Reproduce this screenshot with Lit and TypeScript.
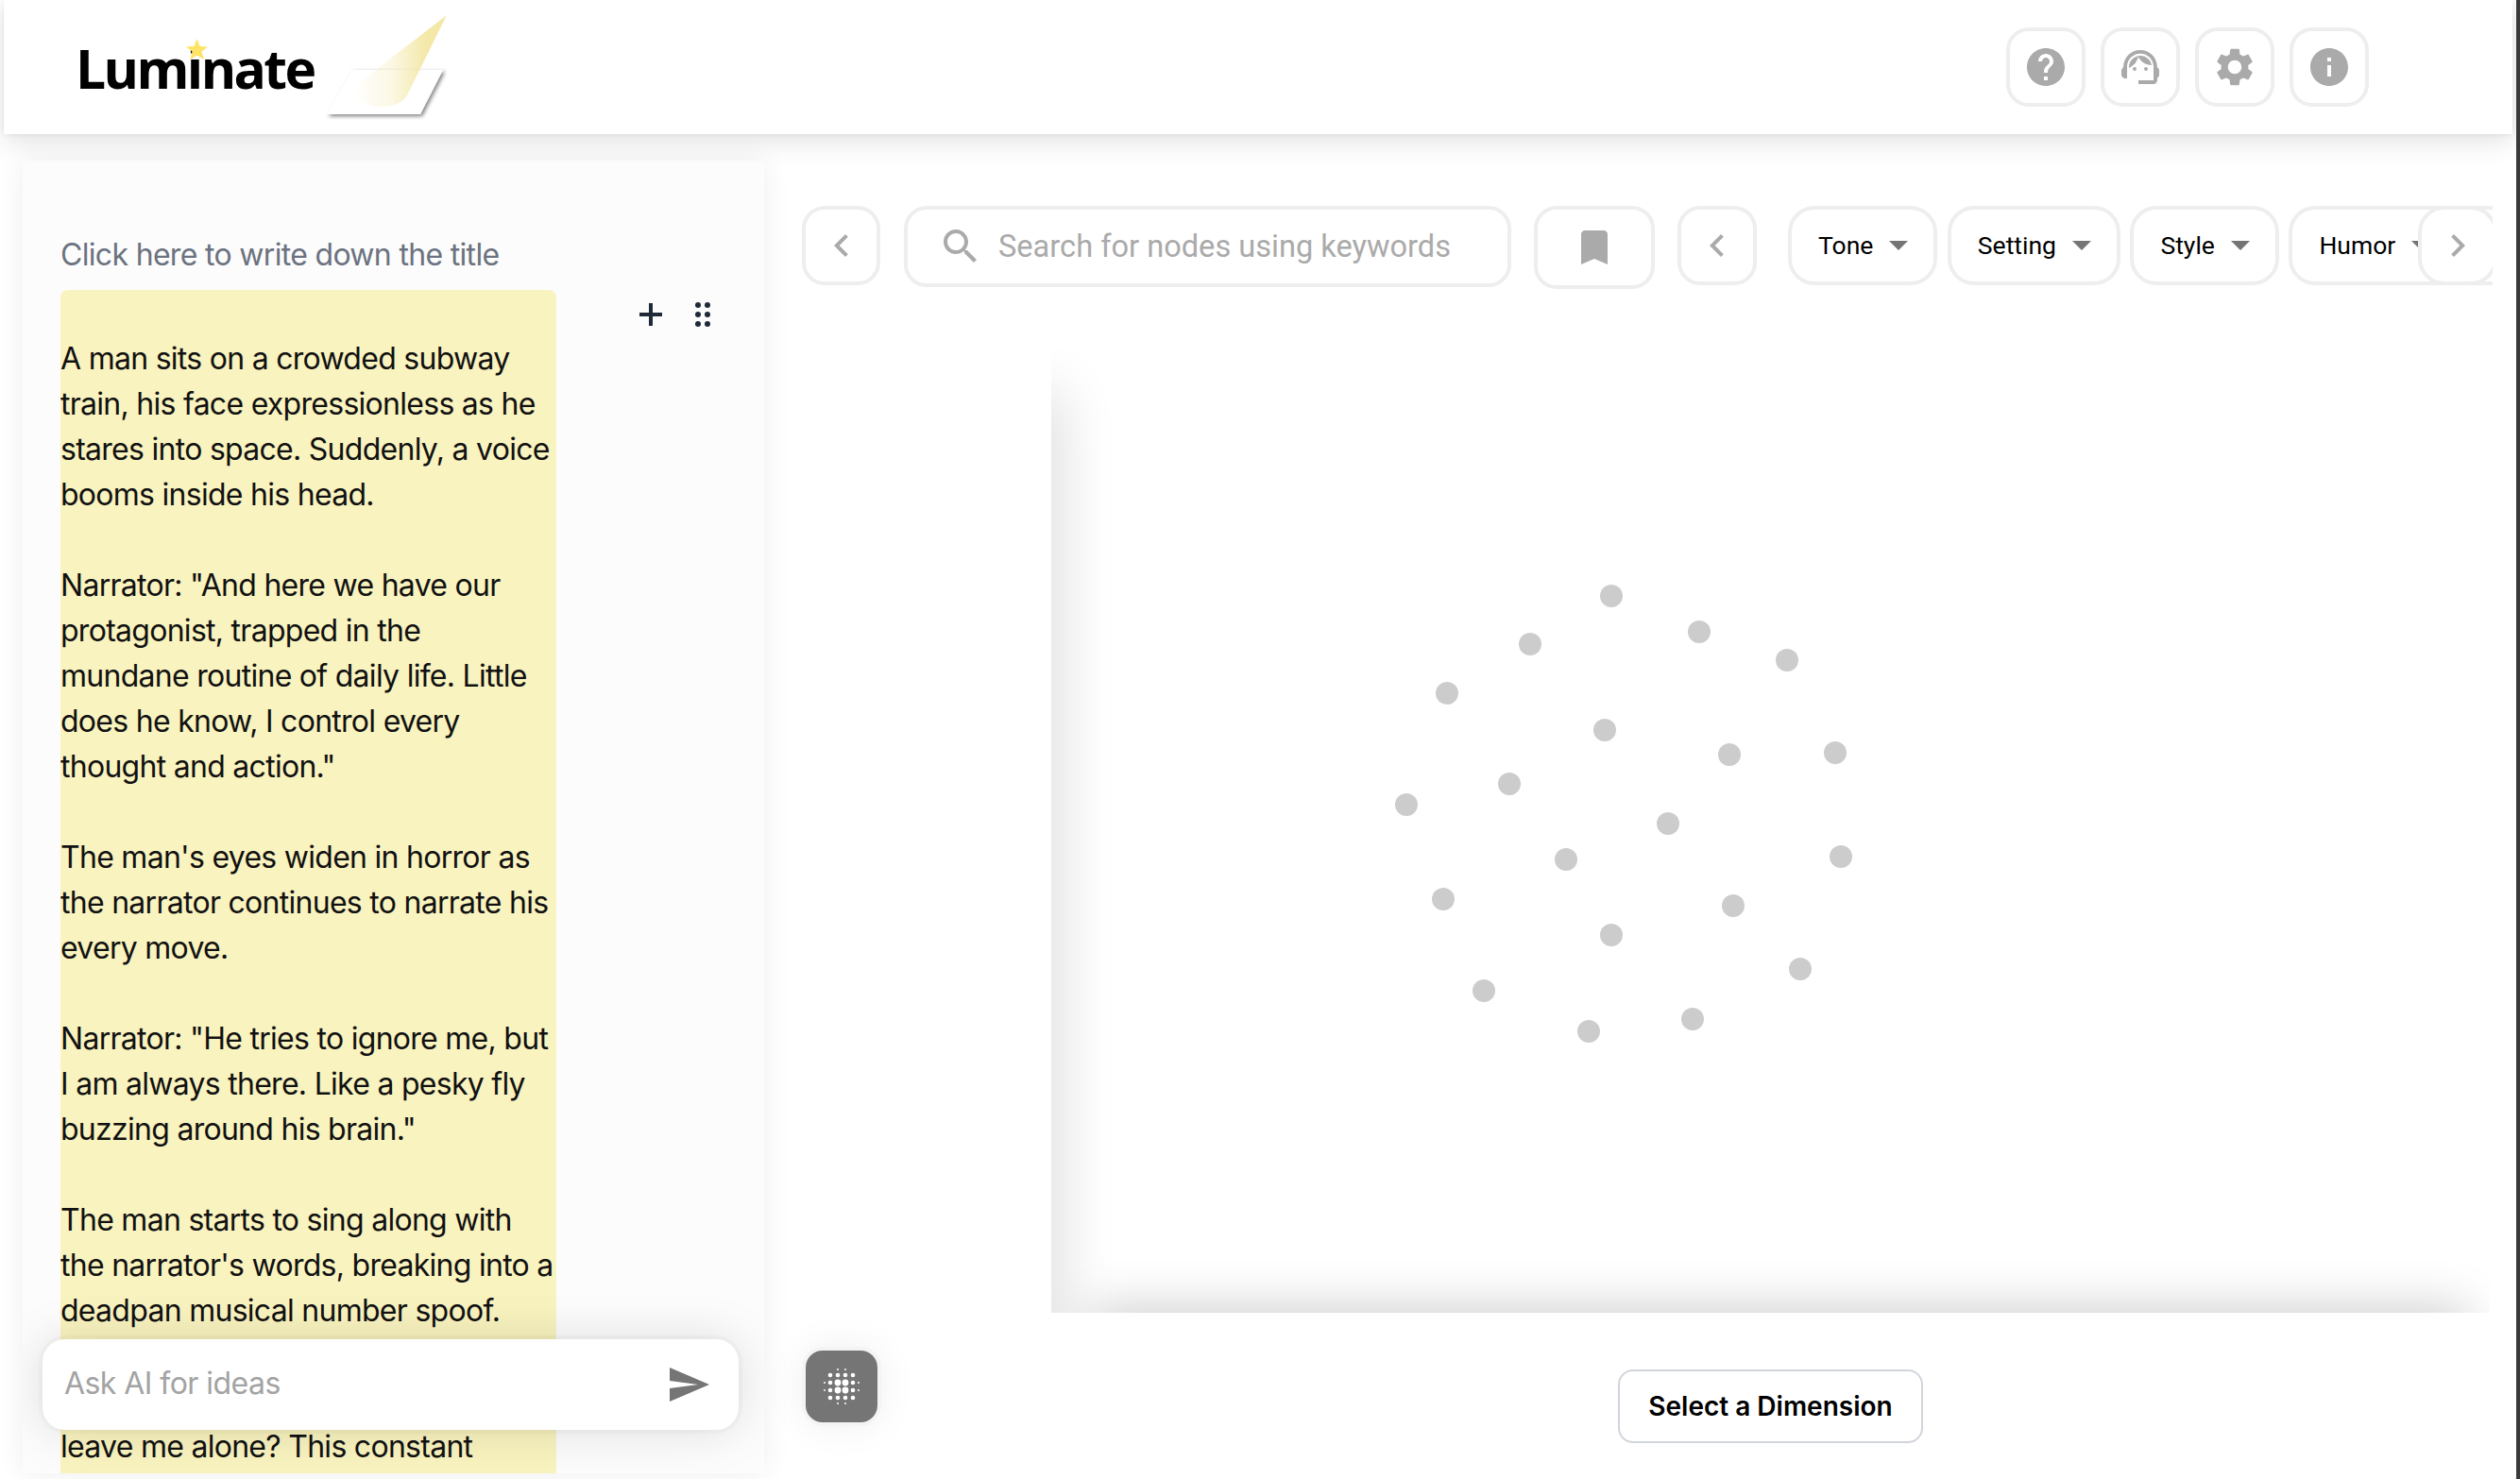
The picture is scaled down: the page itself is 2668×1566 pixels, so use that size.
import { LitElement, html, css, svg } from 'lit';
import { customElement } from 'lit/decorators.js';

const icons: Record<string, unknown> = {
  help: svg`<path d="M12 2C6.48 2 2 6.48 2 12s4.48 10 10 10 10-4.48 10-10S17.52 2 12 2zm1 17h-2v-2h2v2zm2.07-7.75l-.9.92C13.45 12.9 13 13.5 13 15h-2v-.5c0-1.1.45-2.1 1.17-2.83l1.24-1.26c.37-.36.59-.86.59-1.41 0-1.1-.9-2-2-2s-2 .9-2 2H8c0-2.21 1.79-4 4-4s4 1.79 4 4c0 .88-.36 1.68-.93 2.25z"/>`,
  agent: svg`<path d="M21 12.22C21 6.73 16.74 3 12 3c-4.69 0-9 3.65-9 9.28-.6.34-1 .98-1 1.72v2c0 1.1.9 2 2 2h1v-6.1c0-3.87 3.13-7 7-7s7 3.13 7 7V19h-8v2h8c1.1 0 2-.9 2-2v-1.22c.59-.31 1-.92 1-1.64v-2.3c0-.7-.41-1.31-1-1.62z"/><circle cx="9" cy="13" r="1"/><circle cx="15" cy="13" r="1"/><path d="M18 11.03C17.52 8.18 15.04 6 12.05 6c-3.03 0-6.29 2.51-6.03 6.45 2.47-1.01 4.33-3.21 4.86-5.89 1.31 2.63 4 4.44 7.12 4.47z"/>`,
  settings: svg`<path d="M19.14 12.94c.04-.3.06-.61.06-.94 0-.32-.02-.64-.07-.94l2.03-1.58c.18-.14.23-.41.12-.61l-1.92-3.32c-.12-.22-.37-.29-.59-.22l-2.39.96c-.5-.38-1.03-.7-1.62-.94l-.36-2.54c-.04-.24-.24-.41-.48-.41h-3.84c-.24 0-.43.17-.47.41l-.36 2.54c-.59.24-1.13.57-1.62.94l-2.39-.96c-.22-.08-.47 0-.59.22L2.74 8.87c-.12.21-.08.47.12.61l2.03 1.58c-.05.3-.09.63-.09.94s.02.64.07.94l-2.03 1.58c-.18.14-.23.41-.12.61l1.92 3.32c.12.22.37.29.59.22l2.39-.96c.5.38 1.03.7 1.62.94l.36 2.54c.05.24.24.41.48.41h3.84c.24 0 .44-.17.47-.41l.36-2.54c.59-.24 1.13-.56 1.62-.94l2.39.96c.22.08.47 0 .59-.22l1.92-3.32c.12-.22.07-.47-.12-.61l-2.01-1.58zM12 15.6c-1.98 0-3.6-1.62-3.6-3.6s1.62-3.6 3.6-3.6 3.6 1.62 3.6 3.6-1.62 3.6-3.6 3.6z"/>`,
  info: svg`<path d="M12 2C6.48 2 2 6.48 2 12s4.48 10 10 10 10-4.48 10-10S17.52 2 12 2zm1 15h-2v-6h2v6zm0-8h-2V7h2v2z"/>`,
  search: svg`<path d="M15.5 14h-.79l-.28-.27C15.41 12.59 16 11.11 16 9.5 16 5.91 13.09 3 9.5 3S3 5.91 3 9.5 5.91 16 9.5 16c1.61 0 3.09-.59 4.23-1.57l.27.28v.79l5 4.99L20.49 19l-4.99-5zm-6 0C7.01 14 5 11.99 5 9.5S7.01 5 9.5 5 14 7.01 14 9.5 11.99 14 9.5 14z"/>`,
  bookmark: svg`<path d="M17 3H7c-1.1 0-2 .9-2 2v16l7-3 7 3V5c0-1.1-.9-2-2-2z"/>`,
  left: svg`<path d="M15.41 7.41 14 6l-6 6 6 6 1.41-1.41L10.83 12z"/>`,
  right: svg`<path d="M10 6 8.59 7.41 13.17 12l-4.58 4.59L10 18l6-6z"/>`,
  caret: svg`<path d="M7 10l5 5 5-5z"/>`,
  send: svg`<path d="M2.01 21L23 12 2.01 3 2 10l15 2-15 2z"/>`,
};

const icon = (name: string) => html`<svg class="icon" viewBox="0 0 24 24" fill="currentColor">${icons[name]}</svg>`;

const storyLines = [
  '',
  'A man sits on a crowded subway',
  'train, his face expressionless as he',
  'stares into space. Suddenly, a voice',
  'booms inside his head.',
  '',
  'Narrator: "And here we have our',
  'protagonist, trapped in the',
  'mundane routine of daily life. Little',
  'does he know, I control every',
  'thought and action."',
  '',
  "The man's eyes widen in horror as",
  'the narrator continues to narrate his',
  'every move.',
  '',
  'Narrator: "He tries to ignore me, but',
  'I am always there. Like a pesky fly',
  'buzzing around his brain."',
  '',
  'The man starts to sing along with',
  "the narrator's words, breaking into a",
  'deadpan musical number spoof.',
  '',
  '',
  'leave me alone? This constant',
  '',
];

// page coordinates of the loading dots
const dots = [
  [1706, 631], [1620, 682], [1799, 669], [1892, 699], [1532, 734],
  [1699, 773], [1831, 799], [1943, 797], [1598, 830], [1489, 852],
  [1766, 872], [1658, 910], [1949, 907], [1528, 952], [1835, 959],
  [1706, 990], [1906, 1026], [1571, 1049], [1682, 1092], [1792, 1079],
];

const gridCells = () => {
  const out: { x: number; y: number; r: number }[] = [];
  const at = [-18, -12, -4, 4, 12, 18];
  for (const y of at) {
    for (const x of at) {
      const m = Math.max(Math.abs(x), Math.abs(y));
      const n = Math.min(Math.abs(x), Math.abs(y));
      if (m === 18 && n !== 4) continue;
      out.push({ x, y, r: m === 18 ? 1 : m === 12 ? 2.3 : 3.4 });
    }
  }
  return out;
};

@customElement('app-root')
export class AppRoot extends LitElement {
  static styles = css`
    :host {
      display: block;
      width: 2668px;
      height: 1566px;
      overflow: hidden;
      background: #fff;
      font-family: Inter, 'Noto Sans', sans-serif;
    }
    .page {
      display: flex;
      height: 1566px;
    }
    .edge {
      width: 4px;
      background: #3a3a3a;
      position: relative;
      z-index: 3;
    }
    .main {
      flex: 1;
      min-width: 0;
      display: flex;
      flex-direction: column;
      position: relative;
    }
    .icon {
      display: block;
      width: 48px;
      height: 48px;
      flex: none;
    }
    header {
      height: 142px;
      margin: 0 4px;
      padding: 0 152px 0 76px;
      display: flex;
      align-items: center;
      background: #fff;
      box-shadow: 0 0 6px rgba(0, 0, 0, 0.09), 0 10px 24px rgba(0, 0, 0, 0.1);
      position: relative;
      z-index: 2;
    }
    .logo {
      position: relative;
      font-family: 'Open Sans', sans-serif;
      font-weight: 700;
      font-size: 57px;
      line-height: 80px;
      color: #000;
      letter-spacing: -2.6px;
      margin-top: 2px;
    }
    .star {
      position: absolute;
      left: 117px;
      top: 9px;
      width: 23px;
      height: 22px;
    }
    .mark {
      position: absolute;
      left: 336px;
      top: 0;
      width: 140px;
      height: 140px;
    }
    .tools {
      margin-left: auto;
      display: flex;
      gap: 16px;
    }
    .square {
      width: 84px;
      height: 84px;
      box-sizing: border-box;
      border: 4px solid #eee;
      border-radius: 24px;
      background: #fff;
      color: #aaa;
      display: flex;
      align-items: center;
      justify-content: center;
      flex: none;
    }
    .body {
      flex: 1;
      min-height: 0;
      display: flex;
    }
    .panel {
      width: 785px;
      margin: 28px 0 6px 24px;
      box-sizing: border-box;
      padding: 76px 0 0 40px;
      background: #fcfcfc;
      box-shadow: 0 0 28px rgba(0, 0, 0, 0.07);
      position: relative;
      overflow: hidden;
      flex: none;
    }
    .title {
      font-size: 32px;
      line-height: 48px;
      letter-spacing: -0.68px;
      color: #6b7280;
      margin-bottom: 13px;
      white-space: nowrap;
    }
    .story {
      width: 525px;
      box-sizing: border-box;
      padding-top: 1px;
      background: #f9f3bf;
      border-radius: 8px 8px 0 0;
      font-size: 32px;
      line-height: 48px;
      letter-spacing: -0.72px;
      color: #111;
    }
    .story div {
      height: 48px;
      white-space: nowrap;
    }
    .side-menu {
      position: absolute;
      left: 653px;
      top: 150px;
      display: flex;
      align-items: center;
      gap: 35px;
    }
    .ask {
      position: absolute;
      left: 21px;
      bottom: 46px;
      width: 737px;
      height: 96px;
      box-sizing: border-box;
      padding: 0 29px 0 23px;
      display: flex;
      align-items: center;
      justify-content: space-between;
      background: #fff;
      border-radius: 24px;
      box-shadow: 0 0 0 4px rgba(0, 0, 0, 0.02), 0 0 52px rgba(0, 0, 0, 0.13);
      font-size: 32px;
      letter-spacing: -0.55px;
      color: #a3a3a3;
    }
    .ask span {
      margin-top: -3px;
    }
    .ask .icon {
      color: #757575;
    }
    .pane {
      flex: 1;
      min-width: 0;
      display: flex;
      flex-direction: column;
      padding-top: 76px;
    }
    .toolbar {
      height: 88px;
      flex: none;
      display: flex;
      align-items: flex-start;
      padding: 0 25px 0 40px;
    }
    .back {
      width: 83px;
    }
    .search {
      width: 643px;
      height: 86px;
      margin: 0 24px 0 25px;
      box-sizing: border-box;
      border: 4px solid #eee;
      border-radius: 24px;
      padding-left: 32px;
      display: flex;
      align-items: center;
      gap: 16px;
      color: #aaa;
      flex: none;
      font-family: Roboto, sans-serif;
      font-size: 32.6px;
      white-space: nowrap;
    }
    .saved {
      width: 128px;
      height: 88px;
      margin-right: 24px;
    }
    .back2 {
      width: 84px;
      margin-right: 33px;
    }
    .scroller {
      flex: 1;
      min-width: 0;
      height: 84px;
      display: flex;
      gap: 10.5px;
      overflow: hidden;
      position: relative;
    }
    .chip {
      height: 84px;
      box-sizing: border-box;
      border: 4px solid #eee;
      border-radius: 28px;
      background: #fff;
      padding: 0 13px 2px 28px;
      display: flex;
      align-items: center;
      gap: 3px;
      flex: none;
      font-family: Roboto, sans-serif;
      font-size: 26.5px;
      color: #000;
    }
    .chip .icon {
      color: #757575;
    }
    .chip.open-end {
      width: 240px;
    }
    .next {
      position: absolute;
      right: -5px;
      top: 0;
      border-radius: 28px;
    }
    .canvas {
      flex: 1;
      min-height: 0;
      width: 1523px;
      margin: 34px 0 0 304px;
      position: relative;
      overflow: hidden;
    }
    .shade-left {
      position: absolute;
      left: -40px;
      width: 40px;
      top: 85px;
      bottom: -80px;
      box-shadow: 0 0 60px 10px rgba(0, 0, 0, 0.14);
    }
    .shade-bottom {
      position: absolute;
      left: 50px;
      right: 30px;
      bottom: -40px;
      height: 40px;
      box-shadow: 0 0 50px 8px rgba(0, 0, 0, 0.18);
    }
    .canvas svg {
      position: absolute;
      inset: 0;
      width: 100%;
      height: 100%;
    }
    .footer {
      height: 176px;
      flex: none;
      width: 1523px;
      margin-left: 304px;
      display: flex;
      justify-content: center;
      padding-top: 60px;
      box-sizing: border-box;
    }
    .dimension {
      width: 323px;
      height: 78px;
      box-sizing: border-box;
      border: 2px solid #d1d5db;
      border-radius: 16px;
      display: flex;
      align-items: center;
      justify-content: center;
      font-size: 28px;
      font-weight: 600;
      color: #000;
      white-space: nowrap;
    }
    .grid-button {
      position: absolute;
      left: 853px;
      top: 1430px;
      width: 76px;
      height: 76px;
      background: #757575;
      border-radius: 18px;
      box-shadow: 0 0 0 4px #f4f4f4, 0 0 44px rgba(0, 0, 0, 0.08);
      z-index: 1;
    }
    .grid-button svg {
      display: block;
      width: 76px;
      height: 76px;
    }
  `;

  render() {
    return html`
      <div class="page">
        <div class="main">
          <header>
            <div class="logo">
              Luminate
              <svg class="star" viewBox="0 0 22 21"><polygon fill="#fde467" points="11,0 14,7.6 22,8 15.8,13 18,21 11,16.6 4,21 6.2,13 0,8 8,7.6"/></svg>
            </div>
            <svg class="mark" viewBox="340 0 140 140">
              <defs>
                <linearGradient id="beam" gradientUnits="userSpaceOnUse" x1="376" y1="0" x2="452" y2="0">
                  <stop offset="0" stop-color="#f3e8a8" stop-opacity="0.03"/>
                  <stop offset="0.5" stop-color="#f3e8a8" stop-opacity="0.3"/>
                  <stop offset="1" stop-color="#f3e8a8"/>
                </linearGradient>
                <filter id="lift" x="-20%" y="-20%" width="140%" height="140%">
                  <feGaussianBlur in="SourceAlpha" stdDeviation="2"/>
                  <feOffset dx="2" dy="2"/>
                  <feComponentTransfer><feFuncA type="linear" slope="0.5"/></feComponentTransfer>
                  <feMerge><feMergeNode/><feMergeNode in="SourceGraphic"/></feMerge>
                </filter>
              </defs>
              <polygon points="373,74 469,74 445,121 346,121" fill="#fff" filter="url(#lift)"/>
              <path d="M473 16 L431 101 C427 109 415 113 403 113 C388 113 377 106 377 96 C377 92 380 88 385 84 Z" fill="url(#beam)"/>
            </svg>
            <div class="tools">
              <div class="square">${icon('help')}</div>
              <div class="square">${icon('agent')}</div>
              <div class="square">${icon('settings')}</div>
              <div class="square">${icon('info')}</div>
            </div>
          </header>
          <div class="body">
            <section class="panel">
              <div class="title">Click here to write down the title</div>
              <div class="story">
                ${storyLines.map((line) => html`<div>${line}</div>`)}
              </div>
              <div class="side-menu">
                <svg width="24" height="24" viewBox="0 0 24 24" fill="none" stroke="#1f2937" stroke-width="4"><path d="M12 0v24M0 12h24"/></svg>
                <svg width="16" height="26" viewBox="0 0 16 26" fill="#1f2937">
                  ${[3, 13, 23].map((y) => svg`<circle cx="3" cy=${y} r="3"/><circle cx="13" cy=${y} r="3"/>`)}
                </svg>
              </div>
              <div class="ask">
                <span>Ask AI for ideas</span>
                ${icon('send')}
              </div>
            </section>
            <section class="pane">
              <div class="toolbar">
                <div class="square back">${icon('left')}</div>
                <div class="search">${icon('search')}<span>Search for nodes using keywords</span></div>
                <div class="square saved">${icon('bookmark')}</div>
                <div class="square back2">${icon('left')}</div>
                <div class="scroller">
                  ${['Tone', 'Setting', 'Style'].map((c) => html`<div class="chip">${c}${icon('caret')}</div>`)}
                  <div class="chip open-end">Humor${icon('caret')}</div>
                  <div class="square next">${icon('right')}</div>
                </div>
              </div>
              <div class="canvas">
                <div class="shade-left"></div>
                <div class="shade-bottom"></div>
                <svg viewBox="1113 340 1523 1050">
                  ${dots.map(([x, y]) => svg`<circle cx=${x} cy=${y} r="12" fill="#ccc"/>`)}
                </svg>
              </div>
              <div class="footer">
                <div class="dimension">Select a Dimension</div>
              </div>
            </section>
          </div>
          <div class="grid-button">
            <svg viewBox="-38 -38 76 76" fill="#fff">
              ${gridCells().map((d) => svg`<circle cx=${d.x} cy=${d.y} r=${d.r}/>`)}
            </svg>
          </div>
        </div>
        <div class="edge"></div>
      </div>
    `;
  }
}
